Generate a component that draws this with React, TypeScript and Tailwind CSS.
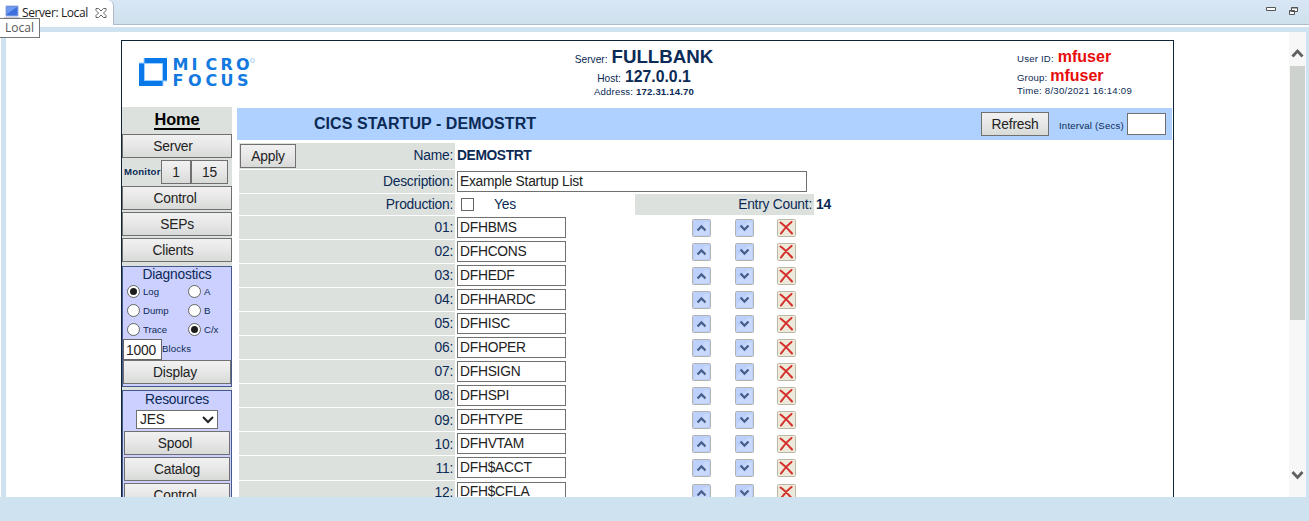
import type { ReactNode } from "react";

const ENTRIES = [
  "DFHBMS", "DFHCONS", "DFHEDF", "DFHHARDC", "DFHISC", "DFHOPER",
  "DFHSIGN", "DFHSPI", "DFHTYPE", "DFHVTAM", "DFH$ACCT", "DFH$CFLA",
];

function Button({ className = "", children }: { className?: string; children: ReactNode }) {
  return (
    <button
      className={`flex h-6 shrink-0 items-center justify-center border border-[#707070] bg-linear-to-b from-[#f1f1f1] via-[#e6e7e6] to-[#d8dad8] pt-[1.5px] text-[13.8px] leading-none tracking-[-0.2px] text-[#222] ${className}`}
    >
      {children}
    </button>
  );
}

function Radio({ label, on = false }: { label: string; on?: boolean }) {
  return (
    <label className="flex h-[19px] w-[61px] items-center gap-[3px] text-[9.6px] leading-none">
      <span className="flex size-[13px] items-center justify-center rounded-full border border-[#666] bg-white">
        {on && <span className="size-[7px] rounded-full bg-[#1c1c1c]" />}
      </span>
      {label}
    </label>
  );
}

function Logo() {
  return (
    <svg width="120" height="32" viewBox="0 0 120 32" className="mt-[15px] ml-[16px] shrink-0">
      <path d="M1 7h24v23H1z" fill="#0979ea" />
      <path d="M6 2h23v23H6z" fill="#0979ea" />
      <path d="M1 7h5V2M25 30v-5h4" fill="none" stroke="#9bd0ff" />
      <path d="M6.500 7.500h18v17h-18z" fill="#fff" stroke="#9bd0ff" />
      <g fill="#1279df" fontFamily="DejaVu Sans" fontWeight="700" fontSize="16">
        <text x="34.500 53.500 67.500 82.500 98" y="14">MICRO</text>
        <text x="34.500 50 67.500 82.500 99" y="29.700">FOCUS</text>
      </g>
      <circle cx="114.500" cy="4.500" r="2" fill="none" stroke="#8fc4f5" strokeWidth="0.8" />
    </svg>
  );
}

function IconBox({ kind }: { kind: "up" | "down" | "delete" }) {
  if (kind === "delete") {
    return (
      <svg width="19" height="18" viewBox="0 0 19 18">
        <rect x="0.500" y="0.500" width="18" height="17" rx="1" fill="#eeeadb" stroke="#bcb8a5" />
        <path d="M3.500 3.500C7 6 11 10 15 14.500M14.500 3C10.500 6 7 10 4 14.500" fill="none" stroke="#d3302b" strokeWidth="2.1" strokeLinecap="round" />
      </svg>
    );
  }
  return (
    <svg width="19" height="18" viewBox="0 0 19 18">
      <rect x="0.500" y="0.500" width="18" height="17" rx="1" fill="#bdd0fc" stroke="#b3b3ae" />
      <path d="M2 13 13 3h4v13H2z" fill="#c9d9fd" />
      <path d={kind === "up" ? "M5.500 11.500l4-4 4 4" : "M5.500 6.500l4 4 4-4"} fill="none" stroke="#47608c" strokeWidth="2.3" />
    </svg>
  );
}

function Sidebar() {
  return (
    <aside className="flex h-[500px] w-[110px] shrink-0 flex-col bg-[#dde1de]">
      <div className="flex h-[27px] items-center justify-center">
        <a className="border-b-2 border-black text-[16.3px] leading-[17px] font-bold text-black">Home</a>
      </div>
      <Button className="pr-[8px]">Server</Button>
      <div className="mt-[2px] flex items-center pl-[2px]">
        <span className="w-[37px] text-[9.6px] font-bold tracking-[0.2px] whitespace-nowrap">Monitor</span>
        <Button className="w-[30px]">1</Button>
        <Button className="w-[37px]">15</Button>
      </div>
      <Button className="mt-[2px] pr-[4px]">Control</Button>
      <Button className="mt-[2px]">SEPs</Button>
      <Button className="mt-[2px] pr-[8px]">Clients</Button>
      <section className="mt-[4px] flex h-[121px] shrink-0 flex-col border border-[#47598a] bg-[#ccd0ff]">
        <h2 className="h-[15px] text-center text-[13.8px] leading-[15px] tracking-[-0.2px]">Diagnostics</h2>
        <div className="grid grid-cols-[61px_47px] pl-1">
          <Radio label="Log" on />
          <Radio label="A" />
          <Radio label="Dump" />
          <Radio label="B" />
          <Radio label="Trace" />
          <Radio label="C/x" on />
        </div>
        <div className="flex items-center text-[9.6px] tracking-[0.15px]">
          <span className="flex h-[21px] w-[39px] items-center border border-[#666] bg-white pt-[2px] pl-[2px] text-[13.8px] leading-none tracking-[-0.2px] text-[#222]">1000</span>
          Blocks
        </div>
        <Button className="pr-[4px]">Display</Button>
      </section>
      <section className="mt-[3px] flex h-[160px] shrink-0 flex-col border border-[#47598a] bg-[#ccd0ff] px-px">
        <h2 className="h-[19px] text-center text-[13.8px] leading-[17px] tracking-[-0.2px]">Resources</h2>
        <div className="ml-[12px] flex h-[19px] w-[82px] items-center justify-between border border-[#707070] bg-white pt-px pr-[3px] pl-[3px] text-[13.8px] leading-none tracking-[-0.2px] text-[#222]">
          JES
          <svg width="12" height="8" viewBox="0 0 12 8"><path d="M1 1l5 5 5-5" fill="none" stroke="#222" strokeWidth="2" /></svg>
        </div>
        <Button className="mt-[2px] pr-[4px]">Spool</Button>
        <Button className="mt-[2px]">Catalog</Button>
        <Button className="mt-[2px] pr-[4px]">Control</Button>
      </section>
    </aside>
  );
}

function Label({ children }: { children?: ReactNode }) {
  return <span className="flex h-full w-[216px] shrink-0 items-center justify-end bg-[#dde1de] pt-px pr-[2px]">{children}</span>;
}

function Form() {
  return (
    <div className="flex flex-col pl-[2px] text-[13.8px] leading-none tracking-[-0.24px]">
      <div className="mt-[3px] flex h-[26px] items-center">
        <div className="flex h-full w-[216px] items-center justify-between bg-[#dde1de] pr-[2px] pl-px">
          <Button className="w-[56px]">Apply</Button>
          <span>Name:</span>
        </div>
        <b className="ml-[2px] tracking-[-0.38px]">DEMOSTRT</b>
      </div>
      <div className="mt-px flex h-[23px] items-center">
        <Label>Description:</Label>
        <span className="ml-[2px] flex h-[21px] w-[350px] items-center border border-[#707070] bg-white pt-[0.5px] pl-[2px] text-[#222]">Example Startup List</span>
      </div>
      <div className="mt-px flex h-[21px] items-center">
        <Label>Production:</Label>
        <span className="ml-[6px] size-[13px] border border-[#666] bg-white" />
        <span className="ml-[20px] w-[141px] pt-px">Yes</span>
        <span className="flex h-full w-[179px] items-center justify-end bg-[#dde1de] pt-px pr-[2px]">Entry Count:</span>
        <b className="ml-[2px] pt-px">14</b>
      </div>
      <div className="mt-px">
        {ENTRIES.map((name, i) => (
          <div key={name} className="flex h-[24.05px] items-start pb-px">
            <Label>{String(i + 1).padStart(2, "0")}:</Label>
            <span className="mt-px ml-[2px] flex h-[21px] w-[109px] items-center border border-[#707070] bg-white pt-[0.5px] pl-[2px] text-[#222]">{name}</span>
            <span className="mt-[3px] ml-[126px] w-[43px]"><IconBox kind="up" /></span>
            <span className="mt-[3px] w-[42px]"><IconBox kind="down" /></span>
            <span className="mt-[3px]"><IconBox kind="delete" /></span>
          </div>
        ))}
      </div>
    </div>
  );
}

function Header() {
  return (
    <header className="flex h-[66px] shrink-0 text-[9.6px] whitespace-nowrap">
      <Logo />
      <div className="ml-[264px] flex w-[244px] flex-col items-center pt-[5px]">
        <div className="flex h-[21px] items-baseline gap-1"><span className="text-[10.2px]">Server:</span><b className="text-[18.7px] leading-[22px]">FULLBANK</b></div>
        <div className="flex h-[19px] items-baseline gap-1"><span className="text-[10.2px]">Host:</span><b className="text-[15.8px] leading-[19px]">127.0.0.1</b></div>
        <div className="flex h-[11px] items-baseline gap-[3px] leading-[11px] tracking-[0.15px]">Address:<b>172.31.14.70</b></div>
      </div>
      <div className="ml-[251px] flex flex-col pt-[6px]">
        <div className="flex h-[19px] items-baseline gap-1"><span className="tracking-[0.2px]">User ID:</span><b className="text-[16px] leading-[19px] text-[#e80c0c]">mfuser</b></div>
        <div className="flex h-[19px] items-baseline gap-[3px]"><span className="tracking-[0.15px]">Group:</span><b className="text-[16px] leading-[19px] text-[#e80c0c]">mfuser</b></div>
        <div className="h-[11px] leading-[11px] tracking-[0.25px]">Time: 8/30/2021 16:14:09</div>
      </div>
    </header>
  );
}

export default function App() {
  return (
    <div className="relative flex h-[521px] w-[1309px] flex-col overflow-hidden bg-[#cfe2ef] font-['Liberation_Sans',sans-serif] text-[#0b2a55]">
      <div className="flex h-[25px] shrink-0 justify-between border-b border-[#aebbcb] bg-linear-to-b from-[#d8e6f5] to-[#cfe1ed]">
        <div className="flex h-[25px] w-[114px] items-center rounded-tr-md border-r border-[#aebbcb] bg-white pl-[4px] text-[#1c1c1c]">
          <svg width="16" height="16" viewBox="0 0 16 16">
            <path d="M2 1h12v10H2z" fill="#3d70dd" stroke="#9aafe0" />
            <path d="M3 2h10L3 9z" fill="#709af0" />
            <path d="M0 12h16v3H0z" fill="#c8c9d2" />
          </svg>
          <span className="ml-[2px] w-[73px] font-['Open_Sans',sans-serif] text-[12px] leading-none tracking-[-0.4px] whitespace-nowrap">Server: Local</span>
          <svg width="12" height="12" viewBox="0 0 12 12">
            <path d="M1 1.500h2.500L6 4l2.500-2.500H11v2L8.500 6 11 8.500v2H8.500L6 8l-2.500 2.500H1v-2L3.500 6 1 3.500z" fill="#fff" stroke="#555" strokeWidth="0.9" />
          </svg>
        </div>
        <svg width="34" height="12" viewBox="0 0 34 12" className="mt-[5px] mr-[10px]">
          <path d="M1.500 2.500h9v3h-9zM26.500 2.500h6v4h-6zM24.500 5.500h5v4h-5z" fill="#fff" stroke="#555" />
          <path d="M26 3h7M24 6h6" stroke="#555" />
        </svg>
      </div>
      <div className="h-[2px] shrink-0 bg-white" />
      <div className="flex h-[470px] shrink-0 overflow-hidden border-l border-white pt-[5px] pr-[3px] pl-[5px]">
        <div className="flex flex-1 overflow-hidden bg-white pt-[8px] pl-[115px]">
          <main className="flex h-[520px] w-[1053px] shrink-0 flex-col border border-[#0e2437]">
            <Header />
            <div className="flex">
              <Sidebar />
              <div className="ml-[5px] flex w-[935px] flex-col pt-px">
                <div className="flex h-8 items-center bg-[#aed1ff]">
                  <h1 className="ml-[77px] w-[667px] text-[16px] font-bold tracking-[0.06px]">CICS STARTUP - DEMOSTRT</h1>
                  <Button className="w-[68px]">Refresh</Button>
                  <span className="mt-[4px] ml-[10px] w-[68px] text-[9.6px] leading-none tracking-[0.2px] whitespace-nowrap">Interval (Secs)</span>
                  <span className="h-[22px] w-[39px] border border-[#707070] bg-white" />
                </div>
                <Form />
              </div>
            </div>
          </main>
        </div>
        <div className="flex w-[17px] shrink-0 flex-col items-center bg-[#f7f7f7]">
          <svg width="13" height="34" viewBox="0 0 13 34" className="shrink-0"><path d="M1.500 24.500l5-5.500 5 5.500" fill="none" stroke="#606060" strokeWidth="2.800" /></svg>
          <div className="h-[254px] w-[15px] shrink-0 bg-[#cdd2cf]" />
          <svg width="13" height="12" viewBox="0 0 13 12" className="mt-[150px] shrink-0"><path d="M1.500 2l5 5.500 5-5.500" fill="none" stroke="#606060" strokeWidth="2.800" /></svg>
        </div>
      </div>
      <div className="absolute top-[18px] left-0 flex h-[20px] w-[40px] items-center border border-l-0 border-[#767676] bg-white pl-[5px] font-['Open_Sans',sans-serif] text-[12px] leading-none text-[#575757]">Local</div>
    </div>
  );
}
